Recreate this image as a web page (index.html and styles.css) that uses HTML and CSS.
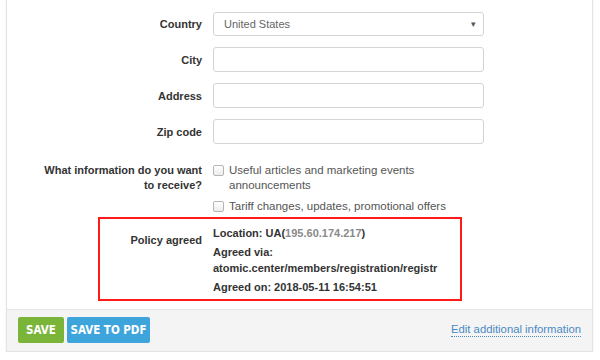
FILE: index.html
```html
<!DOCTYPE html>
<html lang="en">
<head>
    <meta charset="UTF-8">
    <title>Additional information</title>
    <link rel="stylesheet" href="styles.css">
</head>
<body>

<div class="panel">
    <div class="panel-body">
        <div class="form-row">
            <label class="form-label">Country</label>
            <div class="select-box">
                <span>United States</span>
                <span class="caret">&#9662;</span>
            </div>
        </div>
        <div class="form-row">
            <label class="form-label">City</label>
            <div class="input-box"></div>
        </div>
        <div class="form-row">
            <label class="form-label">Address</label>
            <div class="input-box"></div>
        </div>
        <div class="form-row">
            <label class="form-label">Zip code</label>
            <div class="input-box"></div>
        </div>

        <div class="form-row top">
            <label class="form-label multi">What information do you want to receive?</label>
            <div class="checks">
                <div class="check">
                    <span class="box"></span>
                    <span>Useful articles and marketing events announcements</span>
                </div>
                <div class="check">
                    <span class="box"></span>
                    <span>Tariff changes, updates, promotional offers</span>
                </div>
            </div>
        </div>

        <!-- блок согласия, выделен рамкой -->
        <div class="policy">
            <label class="form-label policy-label">Policy agreed</label>
            <div class="policy-info">
                <div class="line">Location: UA(<span class="ip">195.60.174.217</span>)</div>
                <div class="line">Agreed via:<br>atomic.center/members/registration/registr</div>
                <div class="line">Agreed on: 2018-05-11 16:54:51</div>
            </div>
        </div>
    </div>

    <div class="panel-footer">
        <div class="btns">
            <button class="btn btn-save">SAVE</button>
            <button class="btn btn-pdf">SAVE TO PDF</button>
        </div>
        <a href="#" class="edit-link">Edit additional information</a>
    </div>
</div>

</body>
</html>
```

FILE: styles.css
```css
html, body {
    margin: 0;
    padding: 0;
    background: #ffffff;
    font-family: "Liberation Sans", Arial, sans-serif;
    font-size: 11px;
    color: #333333;
}

.panel {
    margin-left: 6px;
    width: 585px;
    border: 1px solid #e3e3e3;
    border-top: none;
    box-shadow: 0 1px 2px rgba(0, 0, 0, 0.08);
    background: #ffffff;
}

.panel-body {
    padding: 12px 0 8px 0;
}

/* строки формы */
.form-row {
    display: grid;
    grid-template-columns: 195px 271px;
    column-gap: 11px;
    align-items: center;
    margin-bottom: 11px;
}
.form-row.top {
    align-items: start;
    margin-top: 19px;
    margin-bottom: 3px;
}

.form-label {
    text-align: right;
    font-weight: bold;
    color: #333333;
}
.form-label.multi {
    line-height: 15px;
    padding-left: 32px;
}

.select-box, .input-box {
    height: 23px;
    border: 1px solid #d4d4d4;
    border-radius: 3px;
    box-sizing: content-box;
}
.select-box {
    display: flex;
    align-items: center;
    justify-content: space-between;
    padding: 0 7px 0 10px;
    color: #666666;
    height: 22px;
}
.caret { font-size: 9px; color: #555555; }

.checks { display: flex; flex-direction: column; gap: 6px; }
.check {
    display: flex;
    align-items: flex-start;
    gap: 5px;
    line-height: 15px;
    color: #555555;
    font-size: 11.5px;
}
.check .box {
    flex: none;
    width: 9px;
    height: 9px;
    margin-top: 2px;
    border: 1px solid #b5b5b5;
    border-radius: 2px;
    background: linear-gradient(#ffffff, #ececec);
}

/* рамка вокруг согласия */
.policy {
    margin-left: 91px;
    width: 360px;
    border: 2px solid #ff1a1a;
    display: grid;
    grid-template-columns: 102px 227px;
    column-gap: 11px;
    padding: 3px 0 1px 0;
}
.policy-label { padding-top: 12px; }
.policy-info { overflow: hidden; white-space: nowrap; }
.policy-info .line {
    font-weight: bold;
    line-height: 16px;
    margin: 3px 0;
}
.ip { color: #8a8a8a; }

.panel-footer {
    display: flex;
    align-items: center;
    justify-content: space-between;
    background: #f4f4f4;
    border-top: 1px solid #e5e5e5;
    padding: 7px 11px 8px 11px;
}
.btns { display: flex; gap: 3px; }

.btn {
    border: none;
    border-radius: 2px;
    height: 26px;
    padding: 0;
    color: #ffffff;
    font-family: "Liberation Sans Narrow", "DejaVu Sans Condensed", sans-serif;
    font-stretch: condensed;
    font-weight: bold;
    font-size: 11.5px;
}
.btn-save { background: #7ab53a; width: 46px; }
.btn-pdf { background: #3da5dc; width: 83px; }

.edit-link {
    color: #4a8ac4;
    text-decoration: none;
    border-bottom: 1px dotted #4a8ac4;
    line-height: 13px;
    font-size: 11.3px;
    margin-top: -1px;
}
```
